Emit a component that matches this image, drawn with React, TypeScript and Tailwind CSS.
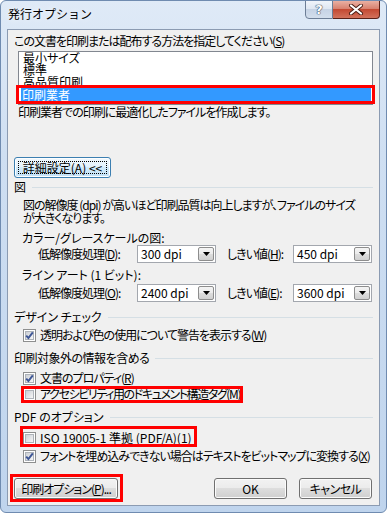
import React from "react";

const U = ({ children }: { children: React.ReactNode }) => (
  <span className="underline underline-offset-[1px]">{children}</span>
);

function Check({ checked }: { checked?: boolean }) {
  return (
    <div className="relative w-[13px] h-[13px] shrink-0 border border-[#8e8f8f] bg-white p-[1px]">
      <div className="w-full h-full border border-[#aeb3b9] bg-[linear-gradient(135deg,#cbcfd5,#f6f6f6)]" />
      {checked && (
        <svg className="absolute left-0 top-0" width="11" height="11" viewBox="0 0 11 11">
          <path d="M2.2 5.6 L4.4 8 L8.8 2.4" fill="none" stroke="#3f5796" strokeWidth="2" />
        </svg>
      )}
    </div>
  );
}

function CheckRow({
  checked,
  children,
  track = "tracking-[-1px]",
}: {
  checked?: boolean;
  children: React.ReactNode;
  track?: string;
}) {
  return (
    <div className="h-[14px] pl-[9px] flex items-center gap-[4px] whitespace-nowrap">
      <Check checked={checked} />
      <span className={track}>{children}</span>
    </div>
  );
}

function Combo({ value }: { value: string }) {
  return (
    <div className="w-[79px] h-[18px] border border-[#a3a7ae] bg-white flex items-stretch p-[1px] tracking-normal">
      <span className="flex-1 pl-[2px] flex items-center">{value}</span>
      <div className="w-[16px] border border-[#8d8d8d] rounded-[2px] bg-[linear-gradient(#f4f4f4_0%,#ebebeb_50%,#dddddd_50%,#d0d0d0_100%)] flex items-center justify-center">
        <svg width="7" height="4" viewBox="0 0 7 4">
          <path d="M0 0H7L3.5 4Z" fill="#000" />
        </svg>
      </div>
    </div>
  );
}

function Header({ children, track = "" }: { children: React.ReactNode; track?: string }) {
  return (
    <div className="h-[14px] flex items-center whitespace-nowrap">
      <span className={track}>{children}</span>
      <div className="flex-1 h-px bg-[#d5dfe5] ml-[6px]" />
    </div>
  );
}

function WinButton({ children, className }: { children: React.ReactNode; className?: string }) {
  return (
    <div
      className={
        "h-[21px] border border-[#707070] rounded-[3px] shadow-[inset_0_0_0_1px_#fbfbfb] bg-[linear-gradient(#f2f2f2_0%,#ebebeb_50%,#dddddd_50%,#cfcfcf_100%)] flex items-center justify-center whitespace-nowrap " +
        (className ?? "")
      }
    >
      {children}
    </div>
  );
}

function DpiRow({ l1, v1, l2, v2 }: { l1: React.ReactNode; v1: string; l2: React.ReactNode; v2: string }) {
  return (
    <div className="h-[18px] flex items-center whitespace-nowrap">
      <span className="ml-[24px] w-[99px] tracking-[-1px]">{l1}</span>
      <Combo value={v1} />
      <span className="ml-[11px] w-[66px] tracking-[-1px]">{l2}</span>
      <Combo value={v2} />
    </div>
  );
}

export default function App() {
  return (
    <div className="relative w-[387px] h-[513px] overflow-hidden border border-[#6f8bb0] rounded-[6px] bg-[linear-gradient(180deg,#dfeaf7_0%,#cfdff2_30%,#bfd4ed_100%)] px-[6px] pb-[6px] font-['Noto_Sans_CJK_JP',sans-serif] text-[12px] leading-[14px] text-black [font-feature-settings:'palt']">
      {/* title bar */}
      <div className="h-[28px] flex items-start justify-between">
        <span className="mt-[6px] ml-[1px] [font-feature-settings:normal] [text-shadow:0_0_6px_#ffffff]">発行オプション</span>
        <div className="flex -mt-px">
          <div className="w-[28px] h-[19px] border border-[#6d7e96] rounded-bl-[4px] bg-[linear-gradient(#f0f4fa_0%,#dfe7f2_45%,#c6d3e5_50%,#d3deec_100%)] flex items-center justify-center">
            <span className="font-['DejaVu_Sans',sans-serif] font-bold text-[13px] text-white [text-shadow:0_0_1px_#34455c,0_0_1px_#34455c,0_0_1px_#34455c]">?</span>
          </div>
          <div className="w-[47px] h-[19px] border border-l-0 border-[#5a2118] rounded-br-[4px] bg-[linear-gradient(#eab0a2_0%,#d88270_45%,#c44a33_50%,#d2725c_100%)] flex items-center justify-center">
            <svg width="16" height="11" viewBox="0 0 16 11">
              <path d="M3 1.5 L13 9.5 M13 1.5 L3 9.5" stroke="#4a1d14" strokeWidth="4" strokeLinecap="round" />
              <path d="M3 1.5 L13 9.5 M13 1.5 L3 9.5" stroke="#ffffff" strokeWidth="2.2" strokeLinecap="round" />
            </svg>
          </div>
        </div>
      </div>

      {/* client area */}
      <div className="h-[477px] border border-[#8b9bb2] bg-[#f0f0f0] pl-[6px] pr-[6px] flex flex-col">
        <div className="mt-[3px] h-[16px] flex items-center whitespace-nowrap tracking-[-1px]">
          この文書を印刷または配布する方法を指定してください(<U>S</U>)
        </div>
        <div className="mt-[2px] ml-[4px] h-[54px] border border-[#828790] bg-white pl-[2px] pr-[1px] leading-[12px]">
          <div className="h-[12px] pl-[2px]">最小サイズ</div>
          <div className="h-[12px] pl-[2px]">標準</div>
          <div className="h-[12px] pl-[2px]">高品質印刷</div>
          <div className="h-[13px] pl-[1px] bg-[#3399ff] text-white leading-[13px]">印刷業者</div>
        </div>
        <div className="h-[14px] ml-[4px] flex items-center whitespace-nowrap tracking-[-1px]">
          印刷業者での印刷に最適化したファイルを作成します。
        </div>

        <div className="mt-[38px] w-[97px] h-[21px] border border-[#3c7fb1] rounded-[3px] shadow-[inset_0_0_0_1px_#fdfeff] bg-[linear-gradient(#f1f8fd_0%,#e3f2fc_50%,#d2ebfb_50%,#c1e1f7_100%)] p-[3px]">
          <div className="w-full h-full border border-dotted border-black flex items-center justify-center whitespace-nowrap">
            詳細設定(A) &lt;&lt;
          </div>
        </div>

        <div className="mt-[2px]">
          <Header>図</Header>
        </div>
        <div className="mt-[4px] ml-[9px] leading-[13px] whitespace-nowrap tracking-[-1px]">
          図の解像度 (dpi) が高いほど印刷品質は向上しますが、ファイルのサイズ
          <br />
          が大きくなります。
        </div>
        <div className="mt-[7px] ml-[8px] h-[14px] flex items-center whitespace-nowrap">カラー/グレースケールの図:</div>
        <DpiRow
          l1={<>低解像度処理(<U>D</U>):</>}
          v1="300 dpi"
          l2={<>しきい値(<U>H</U>):</>}
          v2="450 dpi"
        />
        <div className="mt-[5px] ml-[8px] h-[14px] flex items-center whitespace-nowrap">ライン アート (1 ビット):</div>
        <div className="mt-[2px]">
          <DpiRow
            l1={<>低解像度処理(<U>O</U>):</>}
            v1="2400 dpi"
            l2={<>しきい値(<U>E</U>):</>}
            v2="3600 dpi"
          />
        </div>

        <div className="mt-[8px]">
          <Header>デザイン チェック</Header>
        </div>
        <div className="mt-[4px]">
          <CheckRow checked>透明および色の使用について警告を表示する(<U>W</U>)</CheckRow>
        </div>

        <div className="mt-[9px]">
          <Header track="tracking-[-0.5px]">印刷対象外の情報を含める</Header>
        </div>
        <div className="mt-[6px]">
          <CheckRow checked>文書のプロパティ(<U>R</U>)</CheckRow>
        </div>
        <div className="mt-[2px]">
          <CheckRow track="tracking-[-1.4px]">アクセシビリティ用のドキュメント構造タグ(<U>M</U>)</CheckRow>
        </div>

        <div className="mt-[9px]">
          <Header>PDF のオプション</Header>
        </div>
        <div className="mt-[7px]">
          <CheckRow track="tracking-normal">ISO 19005-1 準拠 (PDF/A)(<U>1</U>)</CheckRow>
        </div>
        <div className="mt-[4px]">
          <CheckRow checked>フォントを埋め込みできない場合はテキストをビットマップに変換する(<U>X</U>)</CheckRow>
        </div>

        <div className="mt-[15px] flex items-center">
          <WinButton className="w-[104px] tracking-[-1px]">印刷オプション(<U>P</U>)...</WinButton>
          <WinButton className="w-[73px] ml-auto">OK</WinButton>
          <WinButton className="w-[73px] ml-[12px] mr-[1px] tracking-[-0.5px]">キャンセル</WinButton>
        </div>
      </div>

      {/* red annotation frames */}
      <div className="absolute left-[15px] top-[84px] w-[359px] h-[19px] border-[3px] border-[#ff0000]" />
      <div className="absolute left-[20px] top-[385px] w-[222px] h-[17px] border-[3px] border-[#ff0000]" />
      <div className="absolute left-[19px] top-[425px] w-[177px] h-[21px] border-[3px] border-[#ff0000]" />
      <div className="absolute left-[9px] top-[473px] w-[113px] h-[28px] border-[3px] border-[#ff0000]" />
    </div>
  );
}
